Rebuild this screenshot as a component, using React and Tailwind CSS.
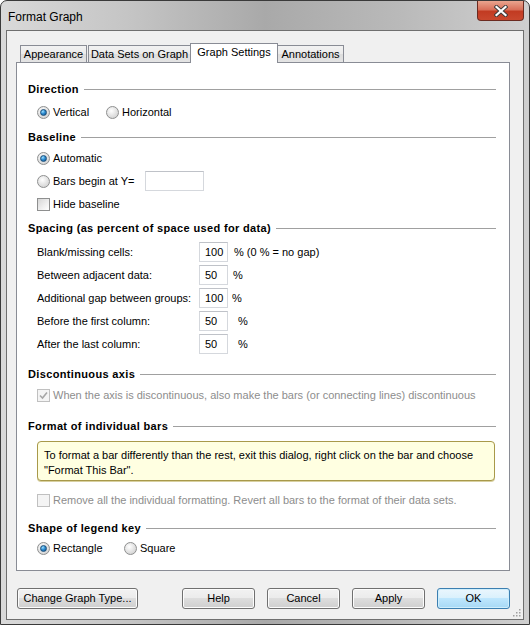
import React, { useState } from 'react'

const font = "font-['Liberation_Sans',Arial,sans-serif]"

const Radio = ({ checked, label, className = '', onClick }) => (
  <div className={`flex items-center h-[16px] cursor-default ${className}`} onClick={onClick}>
    <span className="relative w-[13px] h-[13px] rounded-full border border-[#8e8f8f] bg-[radial-gradient(circle_at_40%_35%,#ffffff_0%,#e6e6e6_45%,#c9c9c9_100%)] flex items-center justify-center shrink-0">
      {checked && (
        <span className="w-[7px] h-[7px] rounded-full border border-[#1b4f7a] bg-[radial-gradient(circle_at_35%_30%,#9fe0ff_0%,#2f8ed3_45%,#0b4c86_100%)]" />
      )}
    </span>
    <span className="ml-[3px] text-[11px] text-black leading-none">{label}</span>
  </div>
)

const Check = ({ checked, disabled, label, className = '', onClick }) => (
  <div className={`flex items-center h-[16px] cursor-default ${className}`} onClick={onClick}>
    <span
      className={`relative w-[13px] h-[13px] border shrink-0 flex items-center justify-center ${
        disabled
          ? 'border-[#c0c0c0] bg-[#f4f4f4]'
          : 'border-[#8e8f8f] bg-[linear-gradient(135deg,#d6d6d6_0%,#f0f0f0_60%,#ffffff_100%)]'
      }`}
    >
      {checked && (
        <svg width="9" height="9" viewBox="0 0 9 9">
          <path d="M1 4.5 L3.5 7 L8 1.5" fill="none" stroke={disabled ? '#a6a6a6' : '#1c3e6e'} strokeWidth="1.6" />
        </svg>
      )}
    </span>
    <span className={`ml-[3px] text-[11px] leading-none ${disabled ? 'text-[#8d8d8d]' : 'text-black'}`}>{label}</span>
  </div>
)

const Heading = ({ children, className = '' }) => (
  <div className={`flex items-center h-[16px] ${className}`}>
    <span className="text-[11px] font-bold tracking-[0.35px] text-black leading-none whitespace-nowrap">{children}</span>
    <span className="flex-1 h-px bg-[#a0a0a0] ml-[5px]" />
  </div>
)

const TextBox = ({ value, className = '' }) => (
  <div className={`h-[20px] border border-[#d5d8dd] border-t-[#bfc2c8] bg-white flex items-center pl-[5px] text-[11px] text-black leading-none ${className}`}>
    {value}
  </div>
)

const Button = ({ children, primary, className = '' }) => (
  <button
    type="button"
    className={`h-[21px] rounded-[3px] border text-[11px] text-black leading-none ${
      primary
        ? 'border-[#3c7fb1] bg-[linear-gradient(#eaf6fd_0%,#d9f0fc_50%,#bee6fd_50%,#a7d9f5_100%)] shadow-[inset_0_0_0_1px_#cfeefc]'
        : 'border-[#707070] bg-[linear-gradient(#f2f2f2_0%,#ebebeb_50%,#dddddd_50%,#cfcfcf_100%)] shadow-[inset_0_0_0_1px_#fcfcfc]'
    } ${className}`}
  >
    {children}
  </button>
)

const spacingRows = [
  { label: 'Blank/missing cells:', value: '100', gap: 'ml-[6px]', suffix: '% (0 % = no gap)' },
  { label: 'Between adjacent data:', value: '50', gap: 'ml-[5px]', suffix: '%' },
  { label: 'Additional gap between groups:', value: '100', gap: 'ml-[4px]', suffix: '%' },
  { label: 'Before the first column:', value: '50', gap: 'ml-[10px]', suffix: '%' },
  { label: 'After the last column:', value: '50', gap: 'ml-[10px]', suffix: '%' },
]

const tabs = ['Appearance', 'Data Sets on Graph', 'Graph Settings', 'Annotations']
const tabWidths = ['w-[67px]', 'w-[103px]', 'w-[88px]', 'w-[67px]']

export default function App() {
  const [direction, setDirection] = useState('vertical')
  const [baseline, setBaseline] = useState('auto')
  const [hideBaseline, setHideBaseline] = useState(false)
  const [shape, setShape] = useState('rect')

  return (
    <div className={`w-[531px] h-[627px] bg-white ${font}`}>
      <div className="w-[530px] h-[625px] rounded-t-[7px] border border-[#3a3a3a] bg-[linear-gradient(90deg,#d9d9d9_0%,#c4c4c4_25%,#a9a9a9_50%,#b9b9b9_75%,#cfcfcf_100%)] flex flex-col">
        {/* title bar */}
        <div className="relative h-[29px] flex items-center pl-[7px]">
          <span className="text-[12px] text-black leading-none mt-[2px]">Format Graph</span>
          <div className="absolute right-[5px] top-0 w-[47px] h-[20px] rounded-b-[4px] border border-t-0 border-[#6b2a20] bg-[linear-gradient(#e9a58f_0%,#d8705a_45%,#c23b22_55%,#c9482e_100%)] flex items-center justify-center">
            <svg width="14" height="12" viewBox="0 0 14 12">
              <path d="M2.5 2 L11.5 10 M11.5 2 L2.5 10" stroke="#3b3b3b" strokeWidth="4" strokeLinecap="square" />
              <path d="M2.5 2 L11.5 10 M11.5 2 L2.5 10" stroke="#ffffff" strokeWidth="2.2" strokeLinecap="square" />
            </svg>
          </div>
        </div>

        {/* client area */}
        <div className="relative mx-[5px] h-[590px] border border-[#6f6f6f] bg-[#f0f0f0] flex flex-col">
          {/* tabs */}
          <div className="relative z-10 flex items-end h-[20px] mt-[12px] ml-[13px] -mb-px">
            {tabs.map((t, i) =>
              i === 2 ? (
                <div
                  key={t}
                  className={`${tabWidths[i]} h-[20px] -ml-px bg-white border border-b-0 border-[#898c95] flex items-center justify-center text-[11px] leading-none pb-[3px]`}
                >
                  {t}
                </div>
              ) : (
                <div
                  key={t}
                  className={`${tabWidths[i]} h-[18px] ${i === 1 ? 'ml-px' : i === 3 ? '-ml-px' : ''} bg-[linear-gradient(#f2f2f2_0%,#ebebeb_50%,#dddddd_50%,#e4e4e4_100%)] border border-[#898c95] flex items-center justify-center text-[11px] leading-none`}
                >
                  {t}
                </div>
              )
            )}
          </div>

          {/* panel */}
          <div className="ml-[9px] w-[494px] h-[509px] bg-white border border-[#898c95] pl-[11px] pr-[13px] pt-[18px] flex flex-col">
            <Heading>Direction</Heading>
            <div className="flex mt-[7px] ml-[9px]">
              <Radio className="w-[69px]" checked={direction === 'vertical'} label="Vertical" onClick={() => setDirection('vertical')} />
              <Radio checked={direction === 'horizontal'} label="Horizontal" onClick={() => setDirection('horizontal')} />
            </div>

            <Heading className="mt-[9px]">Baseline</Heading>
            <Radio className="mt-[5px] ml-[9px]" checked={baseline === 'auto'} label="Automatic" onClick={() => setBaseline('auto')} />
            <div className="flex items-center h-[20px] mt-[5px] ml-[9px]">
              <Radio className="w-[108px]" checked={baseline === 'y'} label="Bars begin at Y=" onClick={() => setBaseline('y')} />
              <TextBox value="" className="w-[59px] h-[19px]" />
            </div>
            <Check className="mt-[5px] ml-[9px]" checked={hideBaseline} label="Hide baseline" onClick={() => setHideBaseline(!hideBaseline)} />

            <Heading className="mt-[8px]">Spacing (as percent of space used for data)</Heading>
            <div className="flex flex-col gap-[3px] mt-[6px] ml-[9px]">
              {spacingRows.map((r) => (
                <div key={r.label} className="flex items-center h-[20px]">
                  <span className="w-[162px] text-[11px] leading-none">{r.label}</span>
                  <TextBox value={r.value} className="w-[29px]" />
                  <span className={`${r.gap} text-[11px] leading-none`}>{r.suffix}</span>
                </div>
              ))}
            </div>

            <Heading className="mt-[12px]">Discontinuous axis</Heading>
            <Check
              className="mt-[5px] ml-[9px]"
              disabled
              checked
              label="When the axis is discontinuous, also make the bars (or connecting lines) discontinuous"
            />

            <Heading className="mt-[15px]">Format of individual bars</Heading>
            <div className="mt-[7px] ml-[9px] mr-[1px] h-[40px] rounded-[4px] border border-[#a8994a] bg-[#ffffe1] shadow-[0_1px_0_#d8d0a0] px-[6px] pt-[6px] text-[11px] leading-[15px] text-black">
              To format a bar differently than the rest, exit this dialog, right click on the bar and choose "Format This Bar".
            </div>
            <Check
              className="mt-[11px] ml-[9px]"
              disabled
              label="Remove all the individual formatting. Revert all bars to the format of their data sets."
            />

            <Heading className="mt-[12px]">Shape of legend key</Heading>
            <div className="flex mt-[4px] ml-[9px]">
              <Radio className="w-[87px]" checked={shape === 'rect'} label="Rectangle" onClick={() => setShape('rect')} />
              <Radio checked={shape === 'square'} label="Square" onClick={() => setShape('square')} />
            </div>
          </div>

          {/* buttons */}
          <div className="flex items-center mt-[17px] ml-[10px]">
            <Button className="w-[121px]">Change Graph Type...</Button>
            <div className="flex gap-[12px] ml-[44px]">
              <Button className="w-[73px]">Help</Button>
              <Button className="w-[73px]">Cancel</Button>
              <Button className="w-[73px]">Apply</Button>
              <Button className="w-[73px]" primary>OK</Button>
            </div>
          </div>

          {/* resize grip */}
          <svg className="absolute right-[2px] bottom-[2px]" width="10" height="10" viewBox="0 0 10 10">
            {[[8, 2], [8, 5], [5, 5], [8, 8], [5, 8], [2, 8]].map(([x, y]) => (
              <rect key={`${x}-${y}`} x={x} y={y} width="1.5" height="1.5" fill="#a0a0a0" />
            ))}
          </svg>
        </div>
      </div>
    </div>
  )
}
